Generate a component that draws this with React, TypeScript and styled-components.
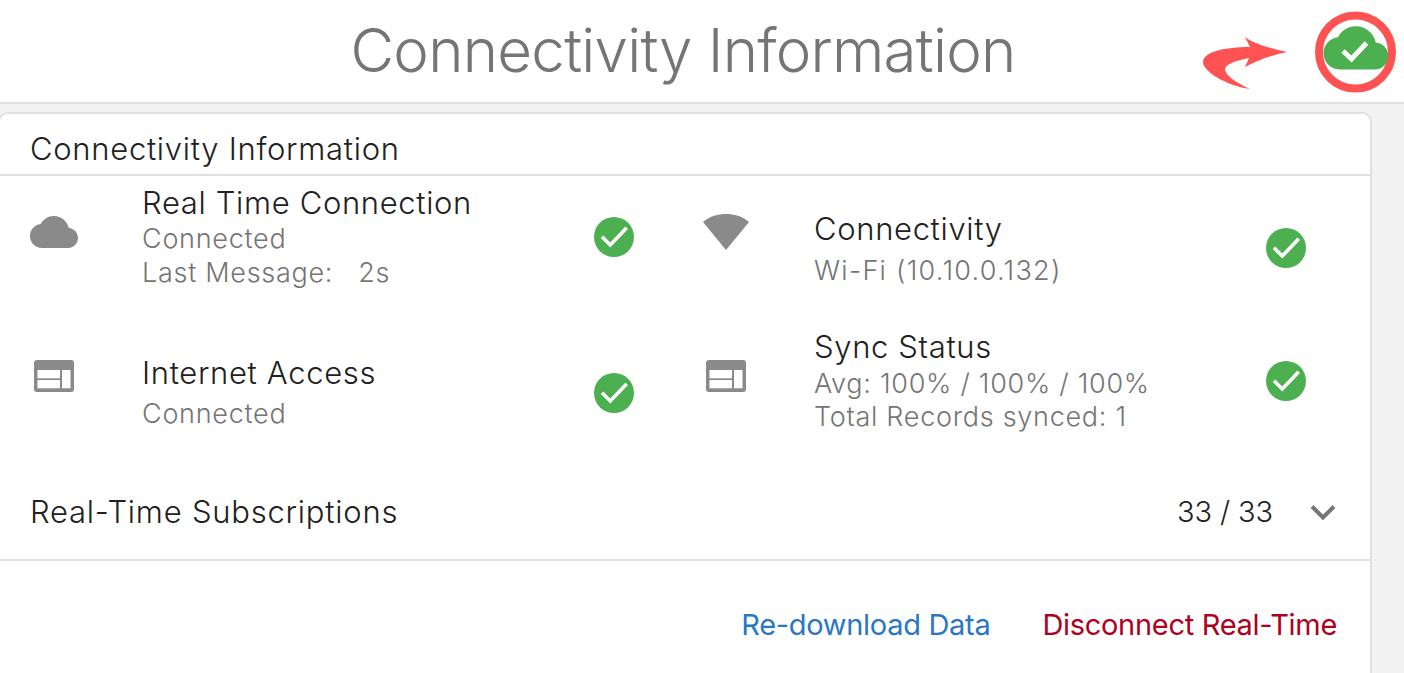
import { createGlobalStyle } from 'styled-components'
import styled from 'styled-components'

const Global = createGlobalStyle`
    html, body {
        margin: 0;
        padding: 0;
        width: 1404px;
        height: 673px;
        overflow: hidden;
        background-color: #f2f2f2;
        font-family: Inter, Roboto, "Liberation Sans", sans-serif;
    }
`

const Header = styled.header`
    position: relative;
    height: 102px;
    background-color: #fff;
    border-bottom: 2px solid #e0e0e0;
    display: flex;
    justify-content: center;
    align-items: center;
`

const Titulo = styled.h1`
    margin: 0 0 2px -38px;
    font-size: 60px;
    font-weight: 300;
    letter-spacing: -0.74px;
    color: #757575;
`

const Anotacao = styled.svg`
    position: absolute;
    left: 1200px;
    top: 8px;
`

const Card = styled.section`
    margin: 8px 32px 0 -2px;
    height: 559px;
    background-color: #fff;
    border: 2px solid #e0e0e0;
    border-bottom: 0;
    border-radius: 10px 10px 0 0;
`

const CardTitulo = styled.div`
    height: 62px;
    box-sizing: border-box;
    padding: 16px 0 0 30px;
    font-size: 31px;
    line-height: 38px;
    font-weight: 300;
    letter-spacing: 0.7px;
    color: #212121;
    border-bottom: 2px solid #e0e0e0;
`

const Grade = styled.div`
    display: grid;
    grid-template-columns: 672px 672px;
    height: 282px;
`

const Celula = styled.div<{ $altura: number }>`
    display: flex;
    align-items: flex-start;
    height: ${({ $altura }) => $altura}px;
    padding-left: 30px;
`

const IconeBox = styled.div<{ $topo: number }>`
    width: 48px;
    margin-top: ${({ $topo }) => $topo}px;
    margin-right: 64px;
    display: flex;
    justify-content: center;
`

const Textos = styled.div<{ $topo: number }>`
    width: 452px;
    margin-top: ${({ $topo }) => $topo}px;
`

const Nome = styled.div`
    font-size: 31px;
    line-height: 36px;
    font-weight: 300;
    letter-spacing: 0.65px;
    color: #212121;
`

const Detalhe = styled.div<{ $passo: number; $largo?: boolean }>`
    font-size: 27px;
    line-height: 34px;
    font-weight: 300;
    letter-spacing: ${({ $largo }) => ($largo ? '1.27px' : '0.72px')};
    color: #757575;
    margin-top: ${({ $passo }) => $passo}px;
    white-space: pre;
`

const Status = styled.svg<{ $topo: number }>`
    margin-top: ${({ $topo }) => $topo}px;
    flex-shrink: 0;
`

const Linha = styled.div`
    height: 103px;
    box-sizing: border-box;
    padding: 6px 34px 0 30px;
    display: flex;
    align-items: center;
    border-bottom: 2px solid #e0e0e0;
    font-size: 31px;
    font-weight: 300;
    letter-spacing: 0.77px;
    color: #212121;
`

const Contagem = styled.span`
    margin-left: auto;
    margin-right: 37px;
    font-size: 29px;
    letter-spacing: -0.1px;
`

const Acoes = styled.div`
    display: flex;
    justify-content: flex-end;
    gap: 52px;
    padding: 46px 33px 0 0;
`

const Acao = styled.a<{ $cor: string }>`
    font-size: 29px;
    line-height: 36px;
    font-weight: 400;
    letter-spacing: -0.3px;
    color: ${({ $cor }) => $cor};
`

const CLOUD = 'M19.35 10.04C18.67 6.59 15.64 4 12 4 9.11 4 6.6 5.64 5.35 8.04 2.34 8.36 0 10.91 0 14c0 3.31 2.69 6 6 6h13c2.76 0 5-2.24 5-5 0-2.64-2.05-4.78-4.65-4.96z'

const Check = ({ topo }: { topo: number }) => (
    <Status $topo={topo} width="40" height="40" viewBox="0 0 40 40">
        <circle cx="20" cy="20" r="20" fill="#4caf50" />
        <path d="M8 19.7 16.3 28 32.7 10.7" fill="none" stroke="#fff" strokeWidth="3.6" />
    </Status>
)

const Nuvem = () => (
    <svg width="48" height="32" viewBox="0 4 24 16">
        <path d={CLOUD} fill="#8a8a8a" />
    </svg>
)

const Wifi = () => (
    <svg width="48" height="38" viewBox="0 0 48 38">
        <path d="M24 38 1 10C8 4 16 2 24 2s16 2 23 8z" fill="#8a8a8a" />
    </svg>
)

const Janela = () => (
    <svg width="40" height="32" viewBox="0 0 40 32">
        <rect width="40" height="32" rx="3" fill="#8a8a8a" />
        <rect x="3.5" y="10" width="22.5" height="8.3" fill="#fff" />
        <rect x="3.5" y="20" width="22.5" height="8.3" fill="#fff" />
        <rect x="28" y="10" width="8.5" height="18.3" fill="#fff" />
    </svg>
)

export default function App() {
    return (
        <>
            <Global />
            <Header>
                <Titulo>Connectivity Information</Titulo>
                <Anotacao width="200" height="88" viewBox="1200 8 200 88">
                    <path
                        d="M1287 52C1270 48 1254 44 1245 37L1250 47C1225 47 1203 52 1203 62C1203 72 1228 86 1250 89C1235 82 1225 75 1225 69C1226 63 1240 60 1249 58L1245 67C1258 60 1272 55 1287 52Z"
                        fill="#ff5252"
                    />
                    <circle cx="1355.500" cy="52" r="36.500" fill="none" stroke="#ff5252" strokeWidth="8" />
                    <path d={CLOUD} transform="translate(1323.500 15.500) scale(2.700)" fill="#4caf50" />
                    <path d="M1343 51 1351.500 59 1366.500 43" fill="none" stroke="#fff" strokeWidth="5" />
                </Anotacao>
            </Header>
            <Card>
                <CardTitulo>Connectivity Information</CardTitulo>
                <Grade>
                    <Celula $altura={144}>
                        <IconeBox $topo={40}><Nuvem /></IconeBox>
                        <Textos $topo={9}>
                            <Nome>Real Time Connection</Nome>
                            <Detalhe $passo={1}>Connected</Detalhe>
                            <Detalhe $passo={0}>{'Last Message:   2s'}</Detalhe>
                        </Textos>
                        <Check topo={41} />
                    </Celula>
                    <Celula $altura={144}>
                        <IconeBox $topo={36}><Wifi /></IconeBox>
                        <Textos $topo={35}>
                            <Nome>Connectivity</Nome>
                            <Detalhe $passo={7} $largo>Wi-Fi (10.10.0.132)</Detalhe>
                        </Textos>
                        <Check topo={52} />
                    </Celula>
                    <Celula $altura={138}>
                        <IconeBox $topo={40}><Janela /></IconeBox>
                        <Textos $topo={35}>
                            <Nome>Internet Access</Nome>
                            <Detalhe $passo={6}>Connected</Detalhe>
                        </Textos>
                        <Check topo={53} />
                    </Celula>
                    <Celula $altura={138}>
                        <IconeBox $topo={40}><Janela /></IconeBox>
                        <Textos $topo={9}>
                            <Nome>Sync Status</Nome>
                            <Detalhe $passo={2}>Avg: 100% / 100% / 100%</Detalhe>
                            <Detalhe $passo={-1}>Total Records synced: 1</Detalhe>
                        </Textos>
                        <Check topo={41} />
                    </Celula>
                </Grade>
                <Linha>
                    Real-Time Subscriptions
                    <Contagem>33 / 33</Contagem>
                    <svg width="26" height="16" viewBox="0 0 26 16">
                        <path d="M2 2.500 13 13.500 24 2.500" fill="none" stroke="#757575" strokeWidth="4" />
                    </svg>
                </Linha>
                <Acoes>
                    <Acao $cor="#2a78c2">Re-download Data</Acao>
                    <Acao $cor="#b00020">Disconnect Real-Time</Acao>
                </Acoes>
            </Card>
        </>
    )
}
